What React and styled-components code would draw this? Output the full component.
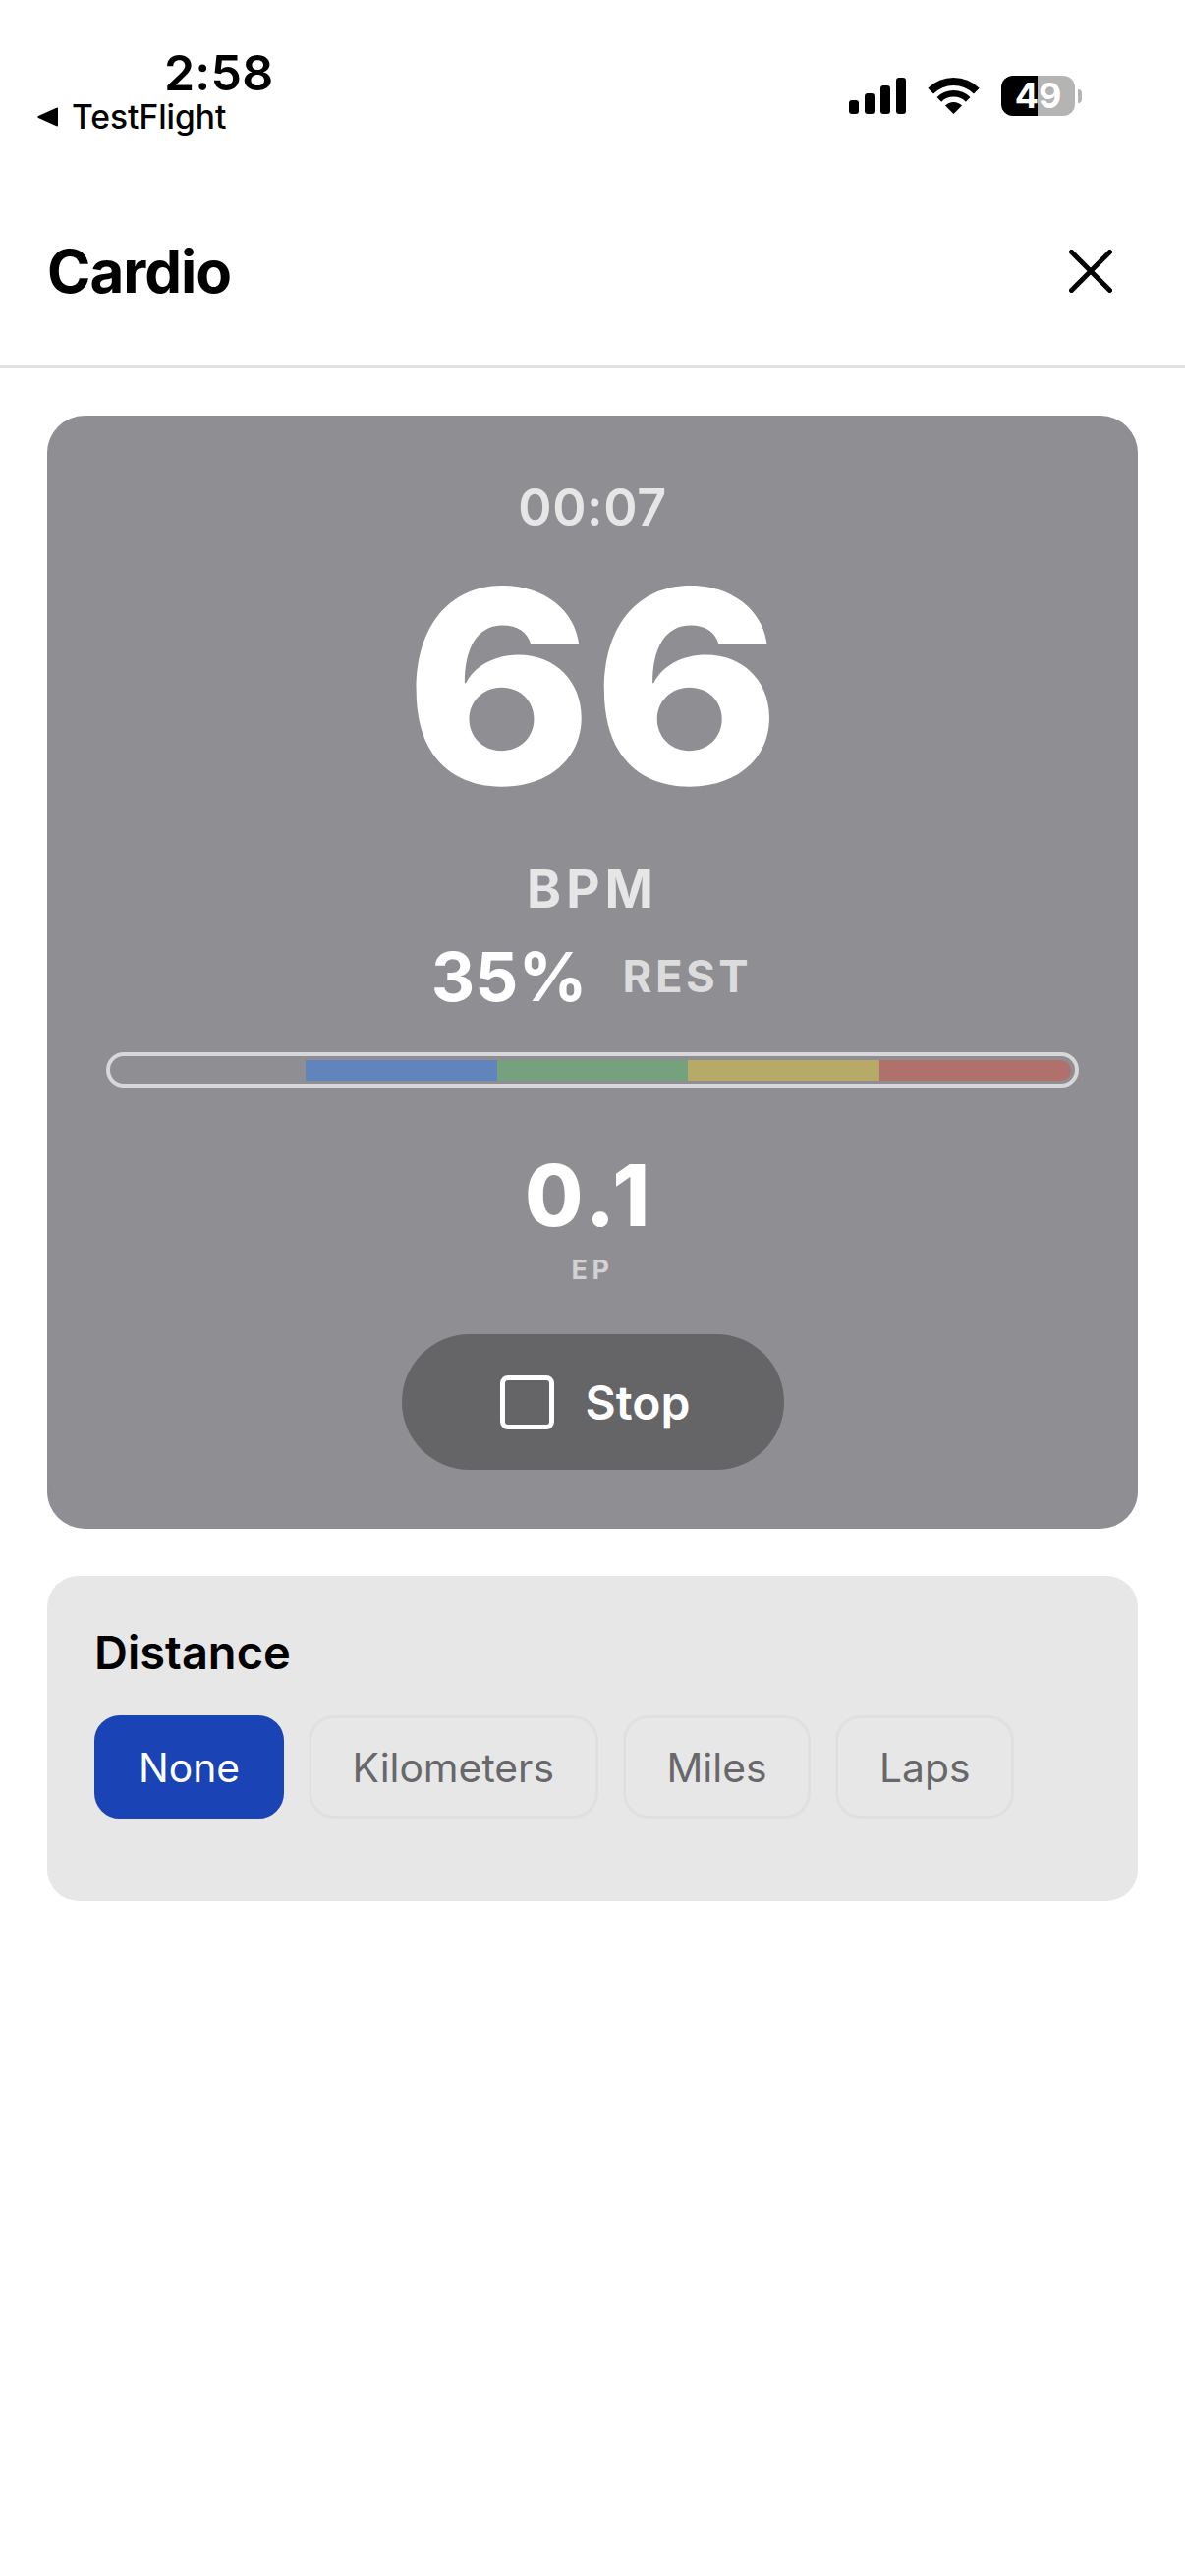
import React from "react";
import styled, { createGlobalStyle } from "styled-components";

const Global = createGlobalStyle`
  html, body { margin: 0; padding: 0; background: #fff; }
  body { font-family: Inter, "Liberation Sans", sans-serif; }
  * { box-sizing: border-box; }
`;
const Page = styled.div`
  width: 1206px; height: 2622px; background: #fff; display: flex; flex-direction: column; overflow: hidden;
`;
const StatusBar = styled.div`
  height: 160px; padding: 46px 112px 0 38px; display: flex; justify-content: space-between; align-items: flex-start;
`;
const StatusLeft = styled.div`display: flex; flex-direction: column;`;
const Time = styled.div`
  font-size: 50px; line-height: 56px; font-weight: 600; color: #000; margin-left: 129px; letter-spacing: 0.2px;
`;
const BackLink = styled.div`
  display: flex; align-items: center; gap: 13px; font-size: 33.5px; line-height: 40px; font-weight: 500; color: #000; margin-top: -3px;
`;
const StatusRight = styled.div`display: flex; align-items: center; gap: 22px; margin-top: 31px;`;
const Signal = styled.div`display: flex; align-items: flex-end; gap: 6px; height: 37px;`;
const SignalBar = styled.span`
  display: block; width: 10px; height: ${p => p.$h}px; background: #000; border-radius: 3px;
`;
const Battery = styled.div`display: flex; align-items: center; gap: 3px; margin-right: -7px;`;
const BatteryBody = styled.div`
  width: 75px; height: 41px; border-radius: 12px; color: #fff; font-size: 36px; font-weight: 700;
  background: linear-gradient(to right, #000 0, #000 37px, #b4b4b4 37px, #b4b4b4 100%);
  display: flex; align-items: center; justify-content: center; line-height: 41px;
`;
const BatteryNub = styled.span`
  display: block; width: 4px; height: 14px; background: #b4b4b4; border-radius: 0 7px 7px 0;
`;
const Header = styled.header`
  height: 215px; padding: 20px 74px 0 48px; display: flex; align-items: center; justify-content: space-between;
  border-bottom: 3px solid #e2e2e2;
`;
const Title = styled.h1`margin: 0; font-size: 60px; line-height: 72px; font-weight: 700; color: #000; letter-spacing: -1px;`;
const Content = styled.main`padding: 48px 48px 0; display: flex; flex-direction: column; gap: 48px;`;
const SessionCard = styled.section`
  height: 1133px; background: #8f8e93; border-radius: 38px; padding-top: 60px;
  display: flex; flex-direction: column; align-items: center;
`;
const Timer = styled.div`font-size: 52px; line-height: 68px; font-weight: 600; color: #e6e6e7; letter-spacing: 0.6px;`;
const Pulse = styled.div`
  font-size: 274px; line-height: 288px; font-weight: 800; color: #fff; margin-top: 4px;
  transform: scaleX(1.055);
`;
const Unit = styled.div`font-size: 53px; line-height: 64px; font-weight: 700; color: #e6e6e7; letter-spacing: 5px; margin-top: 30px;`;
const ZoneRow = styled.div`display: flex; align-items: center; gap: 36px; margin-top: 17px; height: 80px; margin-left: -2px;`;
const Percent = styled.div`font-size: 69px; line-height: 80px; font-weight: 700; color: #fff;`;
const ZoneName = styled.div`font-size: 45.5px; line-height: 80px; font-weight: 700; color: #dcdcdd; letter-spacing: 3.5px;`;
const Track = styled.div`
  width: 990px; height: 36px; margin-top: 37px; border: 4px solid #d8d8da; border-radius: 18px; padding: 4px 4px 3px;
  display: grid; grid-template-columns: repeat(5, 1fr); overflow: hidden;
`;
const Segment = styled.div`background: ${p => p.$c}; ${p => p.$last && "border-radius: 0 12px 12px 0;"}`;
const Points = styled.div`font-size: 86px; line-height: 90px; font-weight: 800; color: #fff; margin: 65px 6px 0 0; letter-spacing: 5px;`;
const PointsLabel = styled.div`font-size: 27px; line-height: 34px; font-weight: 700; color: #d2d2d4; letter-spacing: 4.5px; margin-top: 14px;`;
const StopButton = styled.button`
  width: 389px; height: 138px; margin-top: 48px; border: 0; border-radius: 69px; background: #656567; color: #fff;
  font-family: inherit; font-size: 48px; font-weight: 600; display: flex; align-items: center; justify-content: center; gap: 32px; padding: 0 0 0 5px;
`;
const StopIcon = styled.span`display: block; width: 55px; height: 55px; border: 5px solid #fff; border-radius: 8px;`;
const DistanceCard = styled.section`height: 331px; background: #e7e7e8; border-radius: 32px; padding: 48px;`;
const DistanceTitle = styled.h2`margin: 0; font-size: 47px; line-height: 60px; font-weight: 600; color: #000;`;
const Options = styled.div`display: flex; gap: 24.5px; margin-top: 34px;`;
const Option = styled.div`
  height: 105px; padding: 0 42px; border-radius: 26px; display: flex; align-items: center; font-size: 40.8px;
  ${p => p.$active ? "background:#1a43b5;color:#fff;border:3px solid #1a43b5;" : "background:transparent;color:#68686a;border:3px solid #e0e0e1;"}
`;

export default function App() {
  return (
    <Page>
      <Global />
      <StatusBar>
        <StatusLeft>
          <Time>2:58</Time>
          <BackLink>
            <svg width="22" height="20" viewBox="0 0 22 20"><path d="M21 1.5v17a1 1 0 0 1-1.5.8L1 11a1.2 1.2 0 0 1 0-2L19.5.7A1 1 0 0 1 21 1.5z" fill="#000" /></svg>
            TestFlight
          </BackLink>
        </StatusLeft>
        <StatusRight>
          <Signal>
            <SignalBar $h={14} /><SignalBar $h={21} /><SignalBar $h={29} /><SignalBar $h={37} />
          </Signal>
          <svg width="53" height="37" viewBox="-1 0 53 37" fill="#000">
            <path d="M-.66 10.84A37 37 0 0 1 51.66 10.84L46 16.5A29 29 0 0 0 5 16.5Z" />
            <path d="M8.53 20.03A24 24 0 0 1 42.47 20.03L37.87 24.63A17.5 17.5 0 0 0 13.13 24.63Z" />
            <path d="M17 28.5A12 12 0 0 1 34 28.5L25.5 37Z" />
          </svg>
          <Battery>
            <BatteryBody>49</BatteryBody>
            <BatteryNub />
          </Battery>
        </StatusRight>
      </StatusBar>
      <Header>
        <Title>Cardio</Title>
        <svg width="44" height="44" viewBox="0 0 44 44" fill="none" stroke="#000" strokeWidth="5" strokeLinecap="round">
          <path d="M2.5 2.5 41.5 41.5M41.5 2.5 2.5 41.5" />
        </svg>
      </Header>
      <Content>
        <SessionCard>
          <Timer>00:07</Timer>
          <Pulse>66</Pulse>
          <Unit>BPM</Unit>
          <ZoneRow>
            <Percent>35%</Percent>
            <ZoneName>REST</ZoneName>
          </ZoneRow>
          <Track>
            <Segment $c="transparent" />
            <Segment $c="#6084bb" />
            <Segment $c="#76a17f" />
            <Segment $c="#b7aa66" />
            <Segment $c="#b0706c" $last />
          </Track>
          <Points>0.1</Points>
          <PointsLabel>EP</PointsLabel>
          <StopButton><StopIcon />Stop</StopButton>
        </SessionCard>
        <DistanceCard>
          <DistanceTitle>Distance</DistanceTitle>
          <Options>
            <Option $active>None</Option>
            <Option>Kilometers</Option>
            <Option>Miles</Option>
            <Option>Laps</Option>
          </Options>
        </DistanceCard>
      </Content>
    </Page>
  );
}
